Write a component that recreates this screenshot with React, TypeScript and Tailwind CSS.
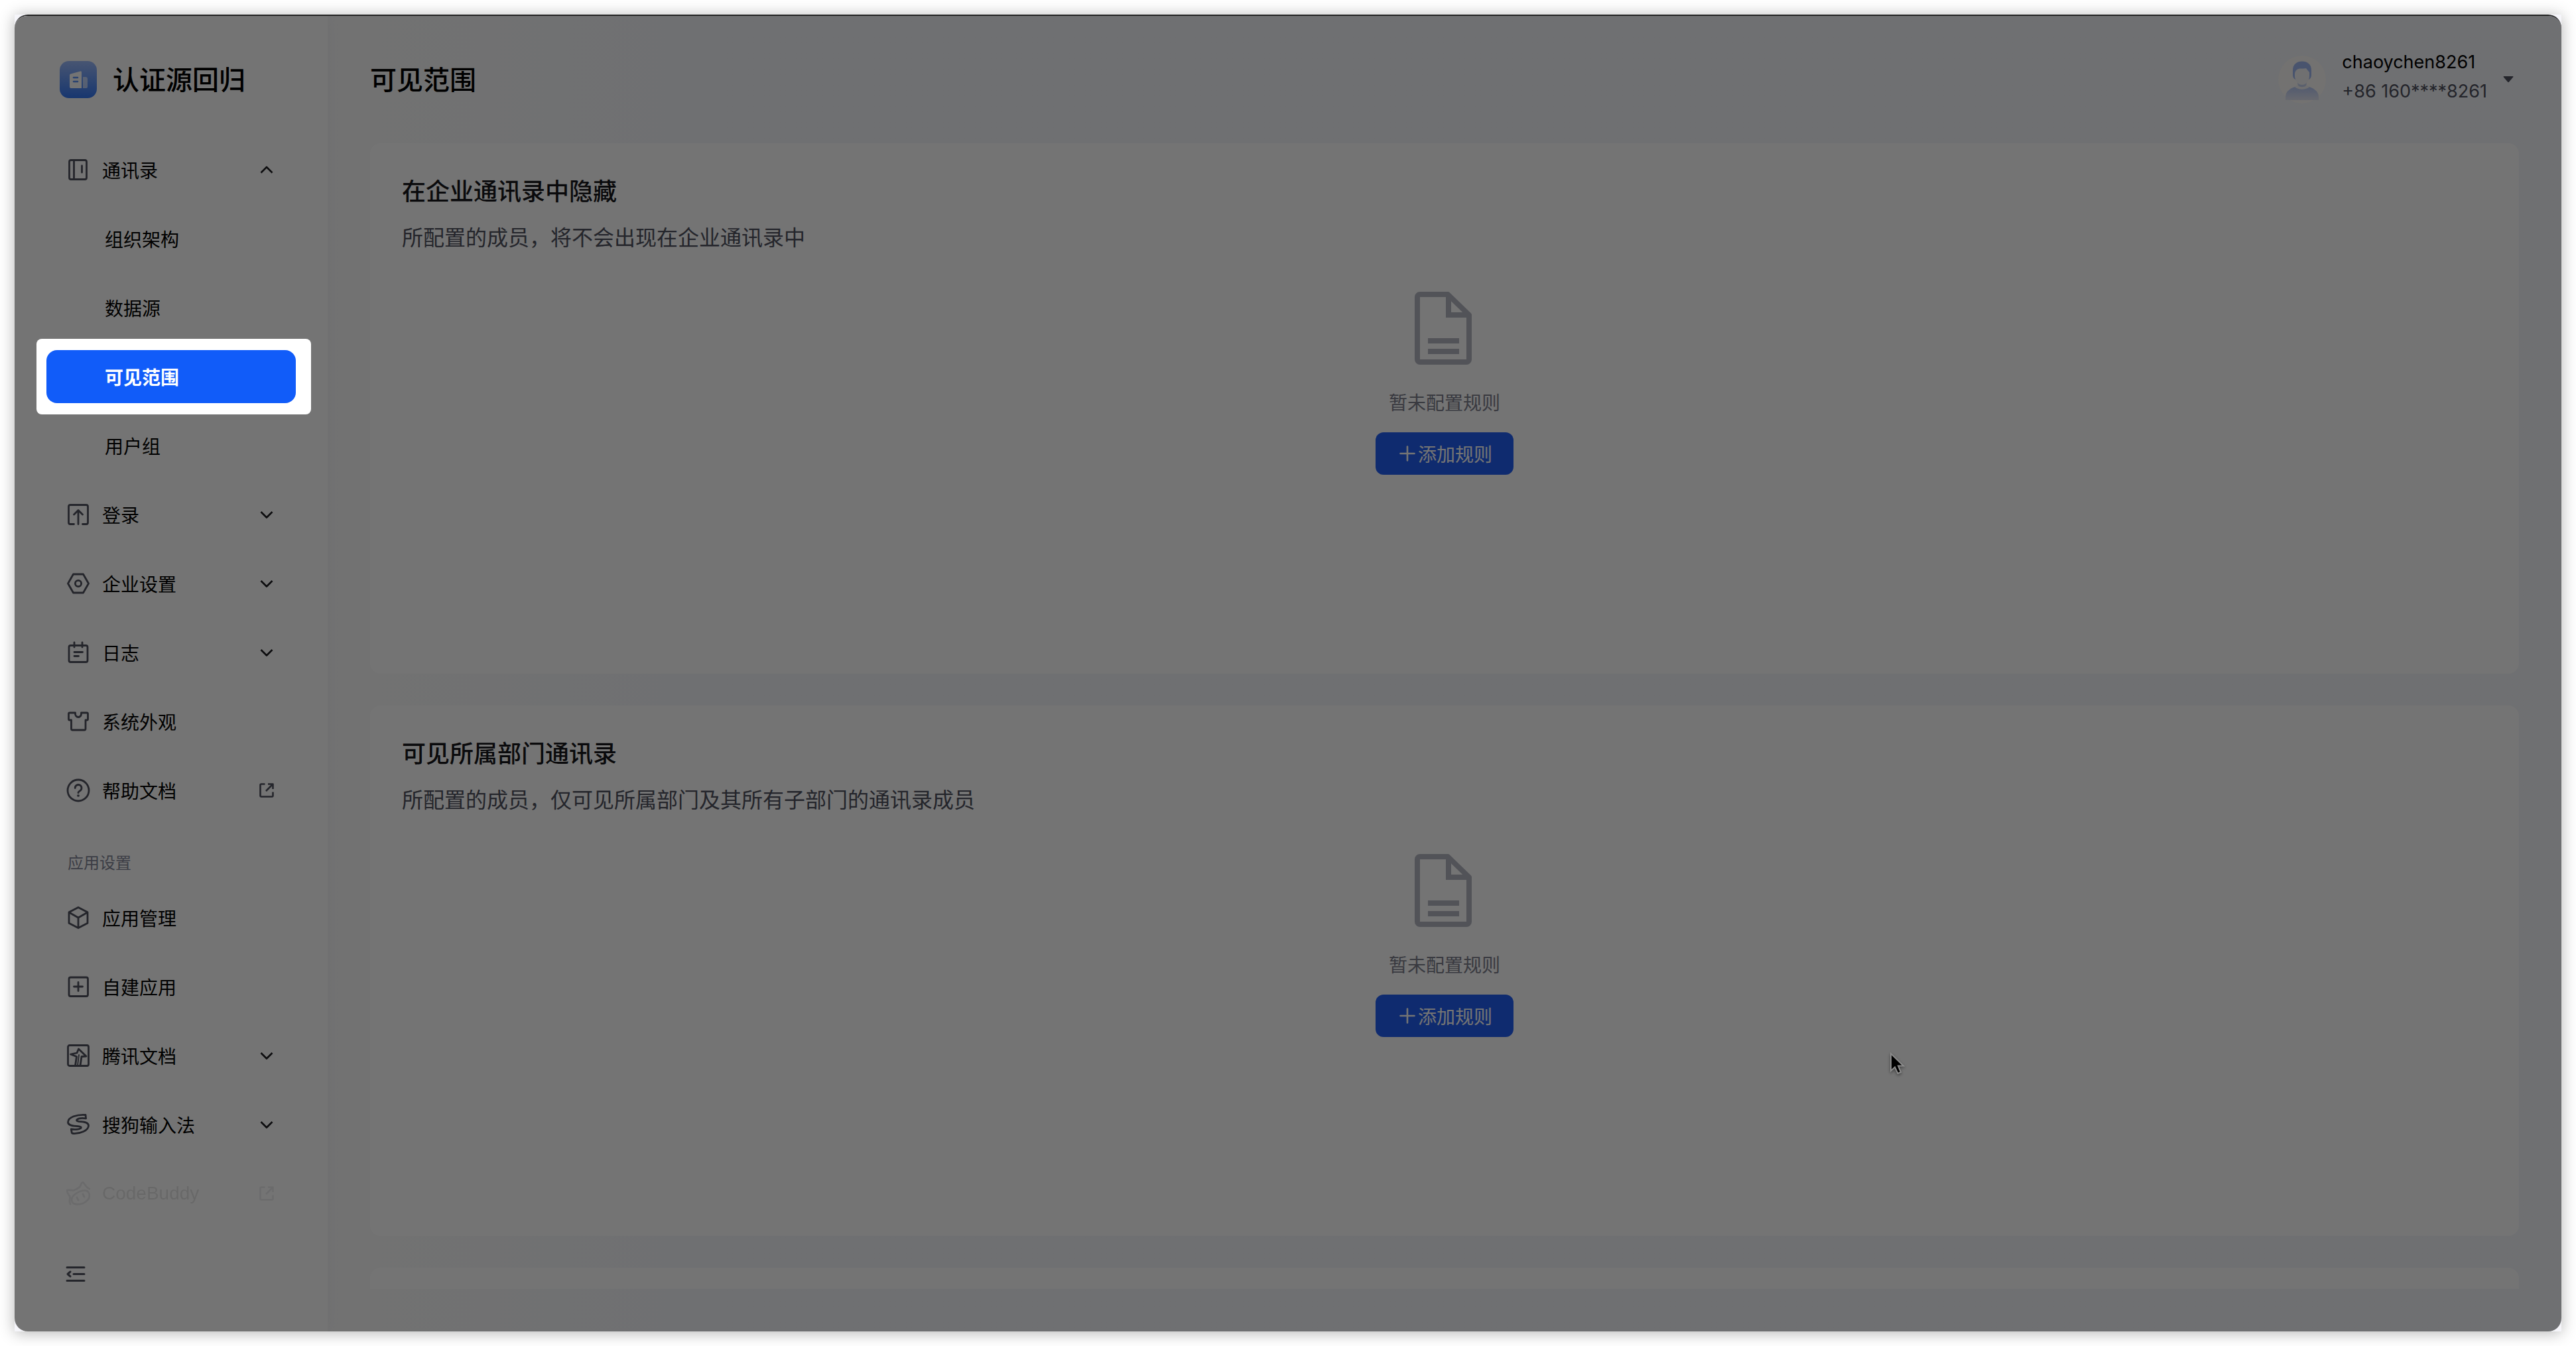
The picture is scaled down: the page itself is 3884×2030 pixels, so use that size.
import type { ReactNode } from "react";

type IconProps = { children: ReactNode };

function LineIcon({ children }: IconProps) {
  return (
    <svg
      viewBox="0 0 36 36"
      className="w-9 h-9 shrink-0"
      fill="none"
      stroke="#50525f"
      strokeWidth="2.8"
      strokeLinecap="round"
      strokeLinejoin="round"
      aria-hidden="true"
    >
      {children}
    </svg>
  );
}

const icons = {
  contacts: (
    <LineIcon>
      <rect x="4.5" y="3.5" width="26" height="29" rx="2.5" />
      <path d="M11.5 3.5v29M23.5 12v10" />
    </LineIcon>
  ),
  login: (
    <LineIcon>
      <path d="M11.5 32.5H6A2.5 2.5 0 0 1 3.5 30V6A2.5 2.5 0 0 1 6 3.5h24A2.5 2.5 0 0 1 32.5 6v24a2.5 2.5 0 0 1-2.5 2.5h-5.5" />
      <path d="M18 32.5V12M11.5 18l6.5-6.5 6.5 6.5" />
    </LineIcon>
  ),
  settings: (
    <LineIcon>
      <path d="M10.5 4h15L33.500 18l-8 14h-15l-8-14z" />
      <circle cx="18" cy="18" r="4.6" />
    </LineIcon>
  ),
  log: (
    <LineIcon>
      <rect x="4" y="7.5" width="28" height="25" rx="2.5" />
      <path d="M12 3v7M24 3v7M12 17.5h12.5M12 23.5h6.5" />
    </LineIcon>
  ),
  shirt: (
    <LineIcon>
      <path d="M5 5h8.500v1a4.500 5 0 0 0 9 1V5H31A1.500 1.500 0 0 1 32.500 6.500v8A1.500 1.500 0 0 1 31 16h-2v13.500A1.500 1.500 0 0 1 27.500 31h-19A1.500 1.500 0 0 1 7.500 29.500V16H5a1.500 1.500 0 0 1-1.500-1.500v-8A1.500 1.500 0 0 1 5 5z" />
    </LineIcon>
  ),
  help: (
    <LineIcon>
      <circle cx="18" cy="18" r="16" />
      <path d="M13.2 14.5a4.9 4.9 0 1 1 7.6 4c-1.800 1.200-2.800 1.800-2.800 3.200" />
      <path d="M17.800 26h.4" strokeWidth="3.4" />
    </LineIcon>
  ),
  cube: (
    <LineIcon>
      <path d="M18 2.500l14 7.300v16.400l-14 7.300-14-7.300V9.800z" />
      <path d="M4.500 10.300L18 18l13.500-7.700M18 18v15" />
    </LineIcon>
  ),
  add: (
    <LineIcon>
      <rect x="4" y="4" width="28.5" height="28.5" rx="2.5" />
      <path d="M18 11.500v13M11.500 18h13" />
    </LineIcon>
  ),
  docs: (
    <LineIcon>
      <rect x="2.5" y="2.500" width="31" height="31" rx="2.5" />
      <path d="M13.500 33l2-13.500-9-3.500 9.500-2L18.500 8l11.500 11-7 .5L21 33" />
      <path d="M19 17l-2 16" strokeWidth="1.8" />
    </LineIcon>
  ),
  sogou: (
    <LineIcon>
      <path d="M29 3.500l.6 5.300c-4-.6-10.600-.6-13.600 1.700-1.200 1.400.5 2.600 3 2.800 6 .3 14.500.8 14.500 6.200 0 7.500-12.500 12.500-23 12-.8 0-2-.3-2.200-1l-1-5.500c4 .7 11.700.8 14.500-1.500 1.300-1.200 0-2.500-2.500-2.700C12 20.300 2.500 20 2.500 14.500 2.500 7 16 2.500 29 3.500z" />
    </LineIcon>
  ),
  buddy: (
    <LineIcon>
      <path d="M6 34c-3-5 1-8-1-12-2-3-5-7-4-9 3-1 7 1 11 0 4-2 7-3 9-6 1-3 2-6 4-6 3 2 4 8 10 10" />
      <path d="M14 34c-7-1-8-9-2-14 5-4 13-8 19-6 5 3 5 10 1 14-5 5-12 7-18 6zM16 24l2 4M25 19l2 4" />
    </LineIcon>
  ),
};

type NavItem = {
  label: string;
  icon?: ReactNode;
  trail?: "up" | "down" | "link";
  active?: boolean;
  faded?: boolean;
};

const mainNav: NavItem[] = [
  { label: "通讯录", icon: icons.contacts, trail: "up" },
  { label: "组织架构" },
  { label: "数据源" },
  { label: "可见范围", active: true },
  { label: "用户组" },
  { label: "登录", icon: icons.login, trail: "down" },
  { label: "企业设置", icon: icons.settings, trail: "down" },
  { label: "日志", icon: icons.log, trail: "down" },
  { label: "系统外观", icon: icons.shirt },
  { label: "帮助文档", icon: icons.help, trail: "link" },
];

const appNav: NavItem[] = [
  { label: "应用管理", icon: icons.cube },
  { label: "自建应用", icon: icons.add },
  { label: "腾讯文档", icon: icons.docs, trail: "down" },
  { label: "搜狗输入法", icon: icons.sogou, trail: "down" },
  { label: "CodeBuddy", icon: icons.buddy, trail: "link", faded: true },
];

const cards = [
  {
    title: "在企业通讯录中隐藏",
    text: "所配置的成员，将不会出现在企业通讯录中",
  },
  {
    title: "可见所属部门通讯录",
    text: "所配置的成员，仅可见所属部门及其所有子部门的通讯录成员",
  },
];

function Trail({ kind }: { kind: "up" | "down" | "link" }) {
  return (
    <svg
      viewBox="0 0 24 24"
      className="w-6 h-6 ml-auto shrink-0"
      fill="none"
      stroke={kind === "link" ? "#50525f" : "#1c1c20"}
      strokeWidth="2.6"
      strokeLinejoin="round"
      aria-hidden="true"
    >
      {kind === "up" && <path d="M3.500 16.500L12 8l8.500 8.500" />}
      {kind === "down" && <path d="M3.500 8L12 16.500 20.500 8" />}
      {kind === "link" && (
        <path d="M9.500 2.500H4A1.500 1.500 0 0 0 2.500 4v16A1.500 1.500 0 0 0 4 21.500h16a1.500 1.500 0 0 0 1.500-1.500v-5.500M14 2.500h7.500V10M21 3L11 13" />
      )}
    </svg>
  );
}

function NavRow({ item }: { item: NavItem }) {
  // the highlighted entry also carries the dimming layer for everything around it
  if (item.active) {
    return (
      <li className="relative z-10">
        <div className="absolute -left-[15px] -right-[23px] -top-[17px] -bottom-[17px] rounded-lg bg-white shadow-[0_0_0_4000px_rgba(0,0,0,0.545)]" />
        <a
          href="#"
          aria-current="page"
          className="relative flex items-center h-20 pl-[88px] rounded-2xl bg-[#115cf9] text-white font-bold"
        >
          {item.label}
        </a>
      </li>
    );
  }
  return (
    <li>
      <a
        href="#"
        className={`flex items-center h-20 pr-8 ${
          item.icon ? "gap-[18px] pl-[30px]" : "pl-[88px]"
        } ${item.faded ? "opacity-10 font-['Liberation_Sans',sans-serif]" : ""}`}
      >
        {item.icon}
        <span>{item.label}</span>
        {item.trail && <Trail kind={item.trail} />}
      </a>
    </li>
  );
}

function Sidebar() {
  return (
    <aside className="flex flex-col w-[472px] shrink-0 px-12 bg-white shadow-[0_0_24px_rgba(30,60,120,0.04)]">
      <div className="flex items-center gap-6 h-14 mt-[68px] pl-5">
        <svg viewBox="0 0 56 56" className="w-14 h-14" aria-hidden="true">
          <defs>
            <linearGradient id="logo" x1="0" y1="0" x2="0" y2="1">
              <stop offset="0" stopColor="#9dbbfa" />
              <stop offset="1" stopColor="#3478f5" />
            </linearGradient>
          </defs>
          <rect width="56" height="56" rx="14" fill="url(#logo)" />
          <path d="M15 21.500a2 2 0 0 1 1.400-1.900L31 15.500a1.500 1.500 0 0 1 2 1.400V41H17a2 2 0 0 1-2-2z" fill="#fff" />
          <path d="M35 24h4a3 3 0 0 1 3 3v12a2 2 0 0 1-2 2h-5z" fill="#fff" opacity=".6" />
          <path d="M21 25h6M21 31h6" stroke="#5c91f7" strokeWidth="2.6" strokeLinecap="round" />
        </svg>
        <span className="pb-1 text-[40px] leading-[56px] font-medium">认证源回归</span>
      </div>
      <nav className="mt-[68px] text-[28px] leading-10">
        <ul className="flex flex-col gap-6">
          {mainNav.map((item) => (
            <NavRow key={item.label} item={item} />
          ))}
        </ul>
        <p className="mt-12 mb-6 pl-8 text-2xl leading-10 text-[#838697]">应用设置</p>
        <ul className="flex flex-col gap-6">
          {appNav.map((item) => (
            <NavRow key={item.label} item={item} />
          ))}
        </ul>
      </nav>
      <button type="button" aria-label="收起菜单" className="mt-16 ml-7 w-9 h-9">
        <svg
          viewBox="0 0 36 36"
          className="w-9 h-9"
          fill="none"
          stroke="#50525f"
          strokeWidth="3"
          strokeLinecap="round"
          strokeLinejoin="round"
        >
          <path d="M3 7.500h26M13 17.500h16M3 27.500h26M8 14l-4 3.500 4 3.500" />
        </svg>
      </button>
    </aside>
  );
}

function Avatar() {
  return (
    <svg viewBox="0 0 72 72" className="w-[72px] h-[72px]" aria-hidden="true">
      <defs>
        <linearGradient id="body" x1="0" y1="0" x2="0" y2="1">
          <stop offset="0" stopColor="#b4c6f3" />
          <stop offset="1" stopColor="#e3e6f5" />
        </linearGradient>
      </defs>
      <circle cx="36" cy="36" r="36" fill="#fcfaf8" />
      <path d="M11 67v-5c0-9 9-14 18-16h14c9 2 18 7 18 16v5z" fill="url(#body)" />
      <path d="M29 36h14v8l4 3c-5 5-17 5-22 0l4-3z" fill="#f4f4f6" />
      <path d="M29 41c4 4 10 4 14 0l-1 4c-3 3-9 3-12 0z" fill="#c9d3f0" />
      <path d="M22 22C22 13 28 8.500 36 8.500S50 13 50 22v7c0 4-2 6-4 7H26c-2-1-4-3-4-7z" fill="#a1b8f2" />
      <path d="M25 28c0-5 3-8 8-8.500 4 0 6 0 9-.5l5 6v6c0 6-5 12-11 12s-11-6-11-12z" fill="#f6f6f8" />
    </svg>
  );
}

function EmptyState() {
  return (
    <div className="flex flex-col items-center mt-[60px]">
      <svg
        viewBox="0 0 90 110"
        className="w-[90px] h-[110px]"
        fill="none"
        stroke="#b4b6c1"
        strokeWidth="8"
        aria-hidden="true"
      >
        <path d="M8 4h42l32 31v67a4 4 0 0 1-4 4H8a4 4 0 0 1-4-4V8a4 4 0 0 1 4-4z" strokeLinejoin="round" />
        <path d="M51 6v29h31M20 74h47M20 90h47" />
      </svg>
      <p className="mt-9 text-[28px] leading-10 text-[#7d808e]">暂未配置规则</p>
      <button
        type="button"
        className="flex items-center justify-center gap-1 w-52 h-16 mt-[26px] pl-1 rounded-xl bg-[#2360f4] text-[28px] leading-10 text-white"
      >
        <svg
          viewBox="0 0 24 24"
          className="w-6 h-6"
          stroke="currentColor"
          strokeWidth="2.6"
          strokeLinecap="round"
          aria-hidden="true"
        >
          <path d="M12 1.500v21M1.500 12h21" />
        </svg>
        添加规则
      </button>
    </div>
  );
}

export default function App() {
  return (
    <div className="h-screen p-[22px] bg-white text-black font-['Noto_Sans_CJK_SC',sans-serif]">
      <div className="h-full bg-[#f5f5fa] shadow-[0_2px_22px_rgba(0,0,0,0.3)]">
        <div className="relative flex h-full overflow-hidden rounded-[20px] border-t-2 border-[#222] bg-linear-to-r from-[#fbfbfb] from-12% to-[#f4f6fa] to-28%">
          <Sidebar />
          <div className="flex flex-col flex-1 min-w-0 px-16 pb-16">
            <header className="flex items-center justify-between h-48">
              <h1 className="pb-1 text-[40px] leading-[56px] font-medium">可见范围</h1>
              <button
                type="button"
                className="flex items-center pr-2 text-left text-[27px] leading-11 font-['Inter','Noto_Sans_CJK_SC',sans-serif]"
              >
                <Avatar />
                <span className="ml-6 pb-2">
                  <span className="block">chaoychen8261</span>
                  <span className="block text-[#50525f]">+86 160****8261</span>
                </span>
                <svg viewBox="0 0 16 10" className="w-4 h-2.5 ml-6" fill="#50525f" aria-hidden="true">
                  <path d="M1 0h14q1 .5 0 1.500L9 8.500q-1 1-2 0L1 1.500Q0 .5 1 0z" />
                </svg>
              </button>
            </header>
            <main className="flex flex-col gap-12 flex-1 min-h-0 overflow-hidden">
              {cards.map((card) => (
                <section key={card.title} className="h-[800px] shrink-0 px-12 pt-11 rounded-2xl bg-white">
                  <h2 className="text-4xl leading-[52px] font-medium text-[#18181c]">{card.title}</h2>
                  <p className="mt-5 text-[32px] leading-12 text-[#50525f]">{card.text}</p>
                  <EmptyState />
                </section>
              ))}
              <section className="h-[800px] shrink-0 rounded-2xl bg-white" />
            </main>
          </div>
          <svg
            viewBox="0 0 24 36"
            className="absolute z-20 left-[2826px] top-[1562px] w-6 h-9 drop-shadow-[0_2px_2px_rgba(0,0,0,0.4)]"
            aria-hidden="true"
          >
            <path
              d="M3 3v26l6-5.500 4.500 9.500 4.500-2-4-9.500h8z"
              fill="#000"
              stroke="#8a8a8a"
              strokeWidth="2"
            />
          </svg>
        </div>
      </div>
    </div>
  );
}
